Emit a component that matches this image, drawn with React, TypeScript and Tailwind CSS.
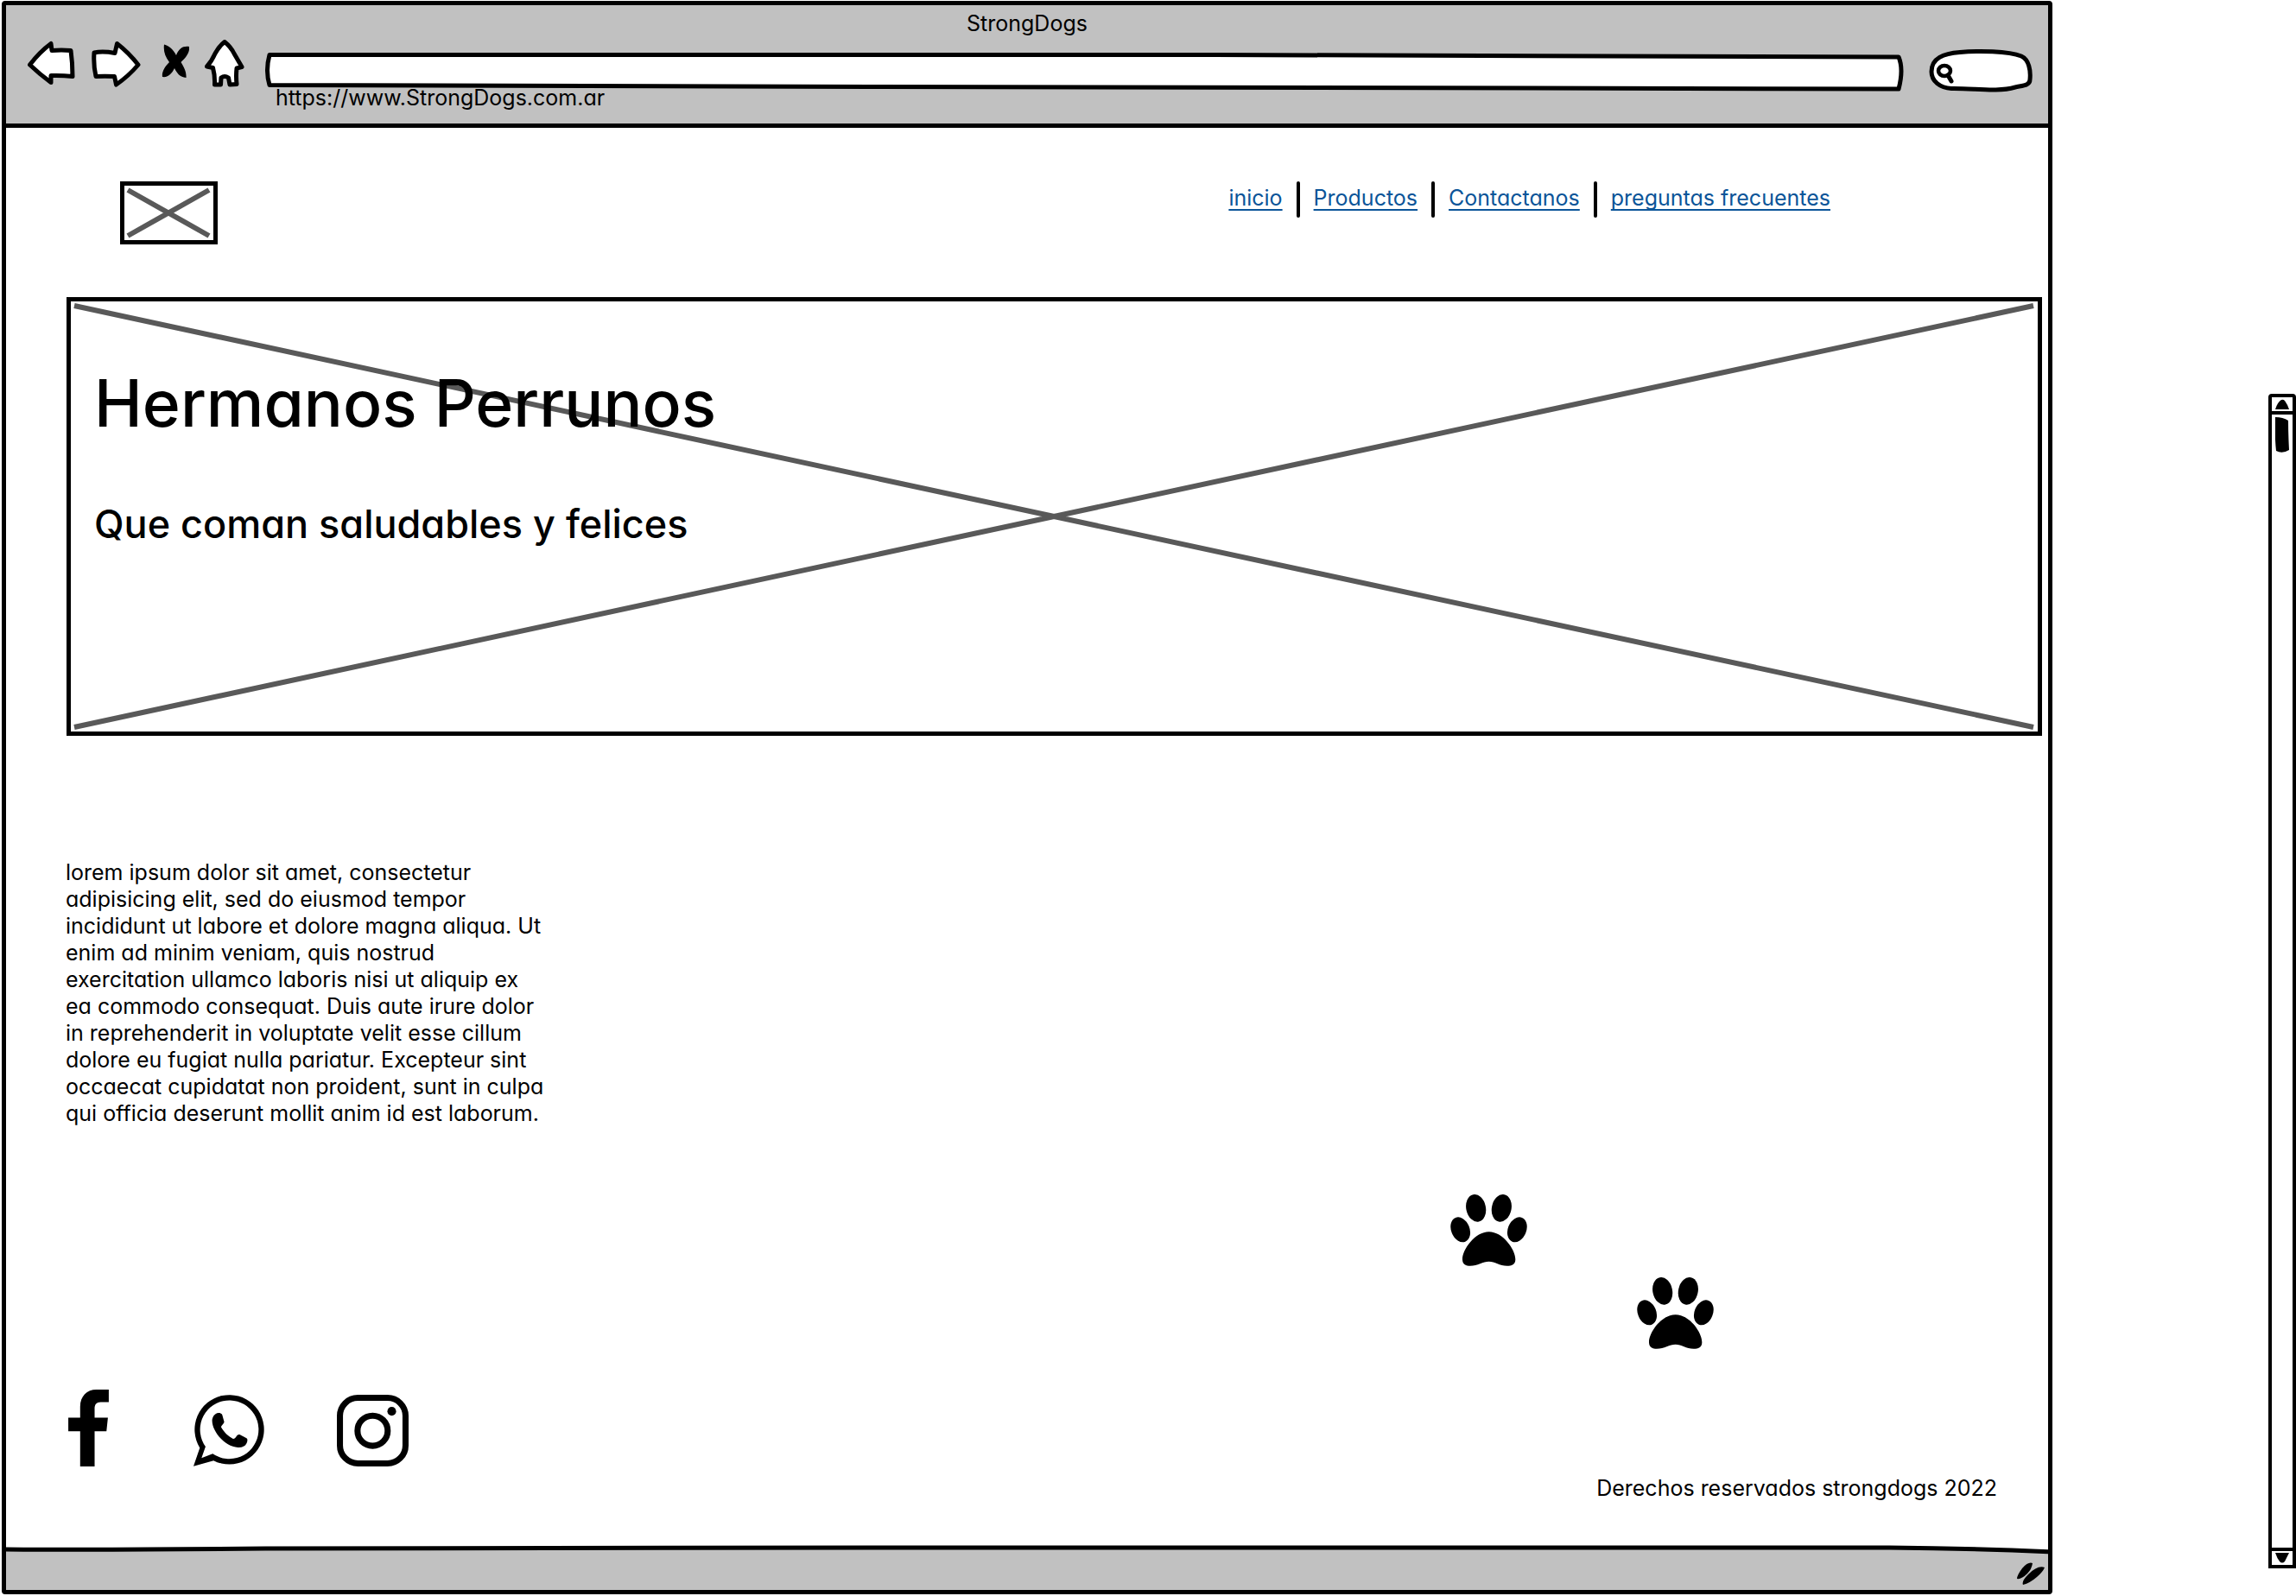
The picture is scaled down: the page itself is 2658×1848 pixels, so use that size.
import React from "react";

const stroke = {
  fill: "#fff",
  stroke: "#000",
  strokeWidth: 5,
  strokeLinejoin: "round" as const,
  strokeLinecap: "round" as const,
};

function BackIcon() {
  return (
    <svg className="block h-14 w-[55px]" viewBox="32 46 55 56" aria-hidden="true">
      <path {...stroke} d="M34.500 75Q46 60 59 50.500L60 58.500Q71 57.500 82 58.500Q84 73 84 88.500Q71 87 59 87.500L59 95.500Q46 86 34.500 75Z" />
    </svg>
  );
}

function ForwardIcon() {
  return (
    <svg className="block h-14 w-[58px]" viewBox="105 46 58 56" aria-hidden="true">
      <path {...stroke} d="M109 61Q119 59 133 61.500L135.500 50.500Q149 61 160 75Q149 88 134.500 98L132.500 88.500Q121 88 111 88.500Q108 76 109 61Z" />
    </svg>
  );
}

function StopIcon() {
  return (
    <svg className="block h-14 w-[38px]" viewBox="181 46 38 56" aria-hidden="true">
      <path d="M190 51.500C196 53 201 58 204 64C207 56 212 53 219 54C220 61 215 67 209.500 72C213 78 216 83 215.500 90C208 89 205 85 202 79C199 85 195 90 188 89C187 83 191 77 196 72C191 65 189 59 190 51.500Z" />
    </svg>
  );
}

function HomeIcon() {
  return (
    <svg className="block h-14 w-[46px]" viewBox="237 46 46 56" aria-hidden="true">
      <path {...stroke} d="M260 48.500Q267 54 271 62L280 77.500L274 79Q273 88 274 97.500L266 98L264.500 90Q260 87 256 90L255.500 98L248.500 98Q249 88 246.500 78.500L239.500 77Q245 71 249 62Q254 53 260 48.500Z" />
    </svg>
  );
}

function CrossedLines({ width, height }: { width: number; height: number }) {
  return (
    <svg
      className="absolute inset-0 h-full w-full"
      viewBox={`0 0 ${width} ${height}`}
      preserveAspectRatio="none"
      aria-hidden="true"
    >
      <path
        d={`M4 5L${width - 5} ${height - 5}M4 ${height - 5}L${width - 5} 5`}
        fill="none"
        stroke="#595959"
        strokeWidth="6"
        vectorEffect="non-scaling-stroke"
      />
    </svg>
  );
}

function FacebookIcon() {
  return (
    <svg className="block h-[89px] w-[47px]" viewBox="0 0 140 266" aria-hidden="true">
      <path d="M41 266V144H0V97H41V60C41 22 65 0 97 0H140V43H112C97 43 91 52 91 65V97H137L132 144H91V266Z" />
    </svg>
  );
}

function WhatsappIcon() {
  return (
    <svg className="block h-[83px] w-[82px]" viewBox="0 0 247 249" aria-hidden="true">
      <path
        fillRule="evenodd"
        d="M0 249L22 184.500A121 121 0 1 1 70 228.800ZM42 180.300L28 220L67 204.900A102 102 0 1 0 42 180.300Z"
      />
      <path d="M87 63C93 63 98 64 100 69L107 94C108 99 98 105 96 112C106 130 122 146 138 153C142 154 146 150 150 144C154 139 158 137 162 139L185 151C190 154 188 163 185 169C180 180 168 184 155 183C110 180 66 130 65 90C65 78 74 64 87 63Z" />
    </svg>
  );
}

function InstagramIcon() {
  return (
    <svg className="block h-[83px] w-[83px]" viewBox="0 0 247 247" aria-hidden="true">
      <rect x="10.500" y="10.500" width="226" height="226" rx="62" fill="none" stroke="#000" strokeWidth="21" />
      <circle cx="123" cy="124" r="52" fill="none" stroke="#000" strokeWidth="21" />
      <circle cx="189" cy="57" r="15" />
    </svg>
  );
}

function PawIcon({ className }: { className?: string }) {
  return (
    <svg className={`block h-[83px] w-[89px] ${className ?? ""}`} viewBox="0 0 267 248" aria-hidden="true">
      <ellipse cx="89" cy="47" rx="34" ry="48" transform="rotate(-12 89 47)" />
      <ellipse cx="178" cy="47" rx="34" ry="48" transform="rotate(12 178 47)" />
      <ellipse cx="35" cy="122" rx="32" ry="45" transform="rotate(-22 35 122)" />
      <ellipse cx="232" cy="122" rx="32" ry="45" transform="rotate(22 232 122)" />
      <path d="M134 129C86 129 42 190 42 225C42 243 55 248 69 248C95 248 113 233 134 233C155 233 171 248 197 248C213 248 226 243 226 225C226 190 182 129 134 129Z" />
    </svg>
  );
}

const links = ["inicio", "Productos", "Contactanos", "preguntas frecuentes"];

function Toolbar() {
  return (
    <header className="border-b-5 border-black bg-[#c1c1c1] pt-1.5 pb-[15px]">
      <div className="text-center">StrongDogs</div>
      <div className="mt-1 flex items-start pr-[17px] pl-[25px]">
        <div className="flex gap-[18px]">
          <button type="button" aria-label="Atrás"><BackIcon /></button>
          <button type="button" aria-label="Adelante"><ForwardIcon /></button>
          <button type="button" aria-label="Detener"><StopIcon /></button>
          <button type="button" aria-label="Inicio"><HomeIcon /></button>
        </div>
        <div className="mt-3.5 ml-6 flex-1">
          <div className="relative h-[46px]">
            <svg
              className="absolute inset-0 h-full w-full"
              viewBox="0 0 1898 46"
              preserveAspectRatio="none"
              aria-hidden="true"
            >
              <path {...stroke} vectorEffect="non-scaling-stroke" d="M5 3.500L1100 3.500L1892 6Q1898 20 1892 43L700 40.500L5 38.500Q0 22 5 3.500Z" />
            </svg>
            <input id="url" type="text" className="relative h-full w-full bg-transparent px-4 outline-none" />
          </div>
          <label htmlFor="url" className="-mt-2 block pl-3">https://www.StrongDogs.com.ar</label>
        </div>
        <div className="relative mt-2.5 ml-7 h-[52px] w-[122px]">
          <svg className="absolute inset-0 h-full w-full" viewBox="2232 56 122 52" aria-hidden="true">
            <path {...stroke} d="M2259 102.500C2246 102 2236 94 2236 83C2236 67 2250 62 2269 60.500C2290 58.500 2325 59 2340 65C2349 69 2351 82 2350 92C2350 99 2342 99 2333 101C2312 107 2285 102 2259 102.500Z" />
            <ellipse cx="2251" cy="82" rx="7" ry="6" fill="none" stroke="#000" strokeWidth="4.500" />
            <path d="M2255 87L2259 94" stroke="#000" strokeWidth="5" strokeLinecap="round" />
          </svg>
          <input type="search" aria-label="Buscar" className="relative h-full w-full bg-transparent pr-4 pl-9 outline-none" />
        </div>
      </div>
    </header>
  );
}

function Scrollbar() {
  return (
    <div className="mt-[456px] mb-8 flex w-8 flex-col rounded-t-sm border-4 border-black">
      <button type="button" aria-label="Subir" className="flex h-5 items-center justify-center border-b-4 border-black">
        <svg className="h-3 w-4" viewBox="0 0 16 12" aria-hidden="true">
          <path d="M0 12Q3 3 7 1Q9 0 11 2Q14 6 16 12Z" />
        </svg>
      </button>
      <div className="flex flex-1 justify-center pt-[3px]">
        <svg className="h-[41px] w-4" viewBox="0 0 16 41" aria-hidden="true">
          <path d="M0 0Q9 0 15 4Q15 20 16 38Q8 43 1 39Q-1 20 0 0Z" />
        </svg>
      </div>
      <button type="button" aria-label="Bajar" className="flex h-5 items-center justify-center border-t-4 border-black">
        <svg className="h-3 w-4" viewBox="0 0 16 12" aria-hidden="true">
          <path d="M0 0H16Q13 6 11 10Q8 13 5 10Q2 6 0 0Z" />
        </svg>
      </button>
    </div>
  );
}

export default function App() {
  return (
    <div className="flex min-h-screen bg-white font-[Inter,sans-serif] text-[25px] leading-[30px] text-black [font-feature-settings:'cv11']">
      <div className="mt-px mb-0.5 ml-0.5 flex flex-1 flex-col rounded-sm border-5 border-black">
        <Toolbar />

        <main className="flex flex-1 flex-col">
          <div className="flex items-start justify-between pt-[62px] pr-[252px] pl-[132px]">
            <div className="relative h-[73px] w-[113px] border-5 border-black">
              <CrossedLines width={103} height={63} />
            </div>
            <nav className="flex items-center">
              {links.map((label, i) => (
                <React.Fragment key={label}>
                  {i > 0 && <span className="mx-4 h-[42px] w-1 rounded-full bg-black" />}
                  <a
                    href="#"
                    className="pb-1 text-[#0b5599] underline decoration-2 underline-offset-4 [text-decoration-skip-ink:none]"
                  >
                    {label}
                  </a>
                </React.Fragment>
              ))}
            </nav>
          </div>

          <section className="relative mt-[61px] mr-[7px] ml-[70px] min-h-[508px] border-5 border-black pt-[78px] pl-[27px]">
            <CrossedLines width={2277} height={498} />
            <h1 className="relative text-[75px] leading-[80px] font-medium">Hermanos Perrunos</h1>
            <p className="relative mt-[76px] text-[45px] leading-[48px] font-medium">Que coman saludables y felices</p>
          </section>

          <p className="mt-[143px] ml-[69px] w-[557px] leading-[31px]">
            lorem ipsum dolor sit amet, consectetur adipisicing elit, sed do eiusmod tempor incididunt ut
            labore et dolore magna aliqua. Ut enim ad minim veniam, quis nostrud exercitation ullamco
            laboris nisi ut aliquip ex ea commodo consequat. Duis aute irure dolor in reprehenderit in
            voluptate velit esse cillum dolore eu fugiat nulla pariatur. Excepteur sint occaecat cupidatat
            non proident, sunt in culpa qui officia deserunt mollit anim id est laborum.
          </p>

          <div className="mt-[78px] flex items-start justify-end gap-[127px] pr-[387px]">
            <PawIcon />
            <PawIcon className="mt-24" />
          </div>

          <footer className="mt-[47px] flex justify-between pr-[59px] pl-[72px]">
            <div className="flex items-end self-start">
              <a href="#" aria-label="Facebook"><FacebookIcon /></a>
              <a href="#" aria-label="WhatsApp" className="ml-[98px]"><WhatsappIcon /></a>
              <a href="#" aria-label="Instagram" className="ml-[84px]"><InstagramIcon /></a>
            </div>
            <p className="pt-[99px]">Derechos reservados strongdogs 2022</p>
          </footer>
        </main>

        <div className="relative h-[52px]">
          <svg
            className="absolute inset-0 h-full w-full"
            viewBox="0 0 2364 52"
            preserveAspectRatio="none"
            aria-hidden="true"
          >
            <path
              d="M-4 5Q120 6 300 4L1000 3L2180 3Q2280 4 2368 8V56H-4Z"
              fill="#c1c1c1"
              stroke="#000"
              strokeWidth="5"
              vectorEffect="non-scaling-stroke"
            />
          </svg>
          <svg className="absolute right-1 bottom-1.5 h-[26px] w-8" viewBox="2335 1810 32 26" aria-hidden="true">
            <path d="M2335 1829Q2335 1825 2341 1817Q2348 1809 2353 1811Q2352 1818 2347 1823Q2340 1830 2335 1829ZM2342 1836Q2340 1832 2348 1824Q2359 1813 2367 1816Q2365 1821 2358 1827Q2350 1834 2342 1836Z" />
          </svg>
        </div>
      </div>

      <div className="w-[250px] shrink-0" />
      <Scrollbar />
    </div>
  );
}
